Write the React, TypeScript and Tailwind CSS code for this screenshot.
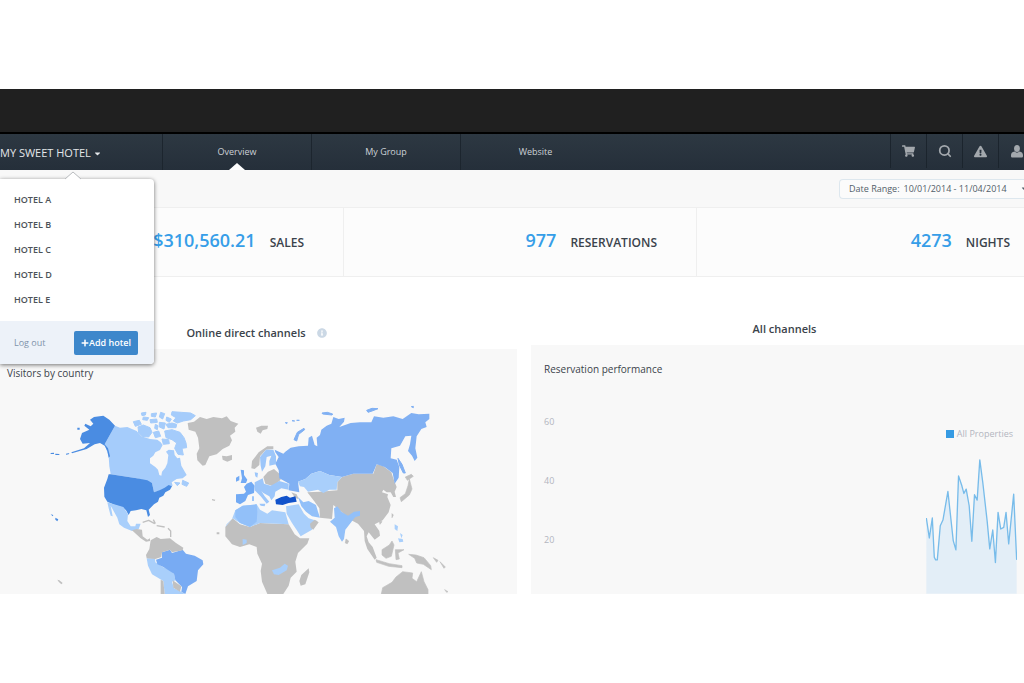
import { useState } from "react";
import { Search } from "lucide-react";
import { FaCaretDown, FaExclamationTriangle, FaInfoCircle, FaPlus, FaShoppingCart } from "react-icons/fa";

const hotels = ["HOTEL A", "HOTEL B", "HOTEL C", "HOTEL D", "HOTEL E"];

const tabs = ["Overview", "My Group", "Website"];

function PersonIcon() {
  return (
    <svg viewBox="0 0 12 13" className="h-[13px] w-3" fill="currentColor">
      <ellipse cx="6" cy="3.600" rx="2.900" ry="3.500" />
      <path d="M3.600 6.600C4.900 8 7.100 8 8.400 6.600 11 7 12 8.400 12 10.400V11c0 1-.6 1.500-1.500 1.500h-9C.6 12.500 0 12 0 11v-.6C0 8.400 1 7 3.600 6.600Z" />
    </svg>
  );
}

const tools = [
  { label: "Cart", icon: <FaShoppingCart className="h-3 w-[13px]" /> },
  { label: "Search", icon: <Search className="size-[14px]" strokeWidth={3} /> },
  { label: "Alerts", icon: <FaExclamationTriangle className="size-[13px]" /> },
  { label: "Account", icon: <PersonIcon /> },
];

const stats = [
  { value: "$310,560.21", label: "SALES", cell: "border-r pr-[39px]" },
  { value: "977", label: "RESERVATIONS", cell: "border-r pr-[39px]" },
  { value: "4273", label: "NIGHTS", cell: "pr-[14px]" },
];

function HotelMenu() {
  return (
    <div className="absolute top-full left-0 z-10 mt-[9px] w-[154px] rounded-r bg-white shadow-[0_1px_4px_rgba(0,0,0,0.55)]">
      <svg className="absolute -top-[8px] left-[64px] h-[9px] w-[18px]" viewBox="0 0 18 9">
        <path d="M1 8.500 9 1l8 7.500V9H1Z" fill="#fff" />
        <path d="M1 8 9 1l8 7" fill="none" stroke="#b9bcbf" strokeWidth="1" />
      </svg>
      <ul className="pt-2 pb-[9px]">
        {hotels.map((name) => (
          <li key={name}>
            <a href="#" className="block pl-[14px] text-[9px] leading-[25px] font-semibold text-[#4c5258]">
              {name}
            </a>
          </li>
        ))}
      </ul>
      <div className="flex h-[43px] items-center justify-between rounded-br bg-[#edf2f9] pr-4 pl-[14px]">
        <a href="#" className="text-[9px] text-[#7f93aa]">
          Log out
        </a>
        <button
          type="button"
          className="flex h-6 w-16 items-center justify-center rounded-xs bg-[#3d87cb] text-[9px] font-semibold text-white"
        >
          <FaPlus className="size-2" />
          Add hotel
        </button>
      </div>
    </div>
  );
}

function WorldMap() {
  return (
    <svg viewBox="0 0 1551 597" className="block w-full" role="img" aria-label="Visitors by country">
      <g transform="translate(120 0)" strokeLinejoin="round">
        {/* Canada */}
        <g fill="#a5ccfb">
          <path d="M225 92 240 98 262 96 290 108 304 124 330 132 352 134 362 142 368 150 360 165 346 172 340 182 330 190 330 205 346 216 354 224 358 240 364 242 366 230 376 218 382 205 385 180 378 170 386 164 402 166 404 180 412 190 420 188 424 212 440 240 428 250 410 252 395 262 398 272 374 282 342 292 336 264 290 250 212 238 208 214 206 184 194 148Z" />
          <path
            stroke="#a5ccfb"
            strokeWidth="3"
            d="M294 96 310 90 330 98 336 112 326 126 306 124 296 114ZM280 80 298 76 304 88 286 94ZM310 66 326 68 322 76 308 74ZM334 56 350 54 346 66 334 64ZM330 74 350 72 352 82 332 84ZM362 52 374 56 368 72 358 66ZM358 82 376 84 372 102 358 96ZM380 66 394 72 388 82 378 76ZM396 50 424 52 452 54 466 62 452 74 430 78 412 84 400 78 408 68 394 60ZM378 88 396 84 410 88 408 98 384 98ZM340 112 356 108 362 124 346 128ZM374 108 396 104 420 112 432 128 438 144 440 158 426 160 430 180 414 178 404 160 410 144 396 134 378 128ZM366 132 386 134 388 146 370 148ZM346 88 354 92 352 104 344 100ZM304 54 318 52 316 60 306 62ZM428 256 446 264 440 274 426 268ZM404 262 420 264 412 272Z"
          />
        </g>
        {/* United States */}
        <g fill="#4a8ce2">
          <path d="M225 92 208 74 190 62 162 66 150 74 160 86 152 94 136 86 133 92 148 104 126 114 120 132 128 146 150 144 132 160 94 172 96 175 140 162 164 148 180 144 194 152 202 168 206 188 210 184 204 160 194 148Z" />
          <path d="M212 238 290 250 322 256 336 264 342 292 362 284 374 278 386 270 396 274 390 284 376 292 370 302 358 308 354 320 342 328 326 344 330 360 324 366 319 346 304 342 288 346 272 348 266 360 258 346 250 338 224 330 202 320 193 305 192 278 202 252 206 238ZM78 176 88 174 86 178 78 179ZM32 174 42 173 42 177 32 177ZM46 176 58 177 58 180 46 180ZM112 98 119 98 119 104 112 104ZM32 358 40 360 38 364ZM46 368 55 373 52 379 46 374Z" />
        </g>
        {/* Mexico and the western half of South America */}
        <g fill="#a9cffb">
          <path d="M202 322 250 336 264 358 262 378 272 394 286 394 288 386 302 386 296 402 276 408 252 398 238 388 232 368 222 350 212 332 218 364 212 362 206 340Z" />
          <path d="M320 490 345 490 346 502 368 516 392 526 402 536 406 556 396 560 402 580 424 590 434 597 374 597 370 558 336 538 324 512Z" />
        </g>
        <path
          fill="#78abf3"
          d="M366 472 390 464 396 474 428 464 438 476 464 482 488 496 490 508 474 526 470 558 444 574 436 597 424 590 426 576 406 556 402 536 370 516 352 508 348 494 366 488Z"
        />
        {/* Countries without visitors */}
        <g fill="#c0c0c0">
          <path d="M276 406 290 402 306 404 308 424 322 434 330 430 330 438 318 440 302 430ZM332 436 350 426 362 432 390 430 408 444 430 458 428 466 396 472 390 464 366 472 364 486 346 492 320 490 318 480 328 462ZM362 554 370 558 374 597 362 597ZM398 556 424 574 420 590 400 578Z" />
          <path d="M443 84 462 80 480 66 500 72 520 66 546 70 560 64 572 78 595 86 584 98 586 110 570 122 576 136 568 152 548 162 530 178 508 184 496 210 488 212 472 196 470 176 478 160 474 128 466 110 446 104ZM546 182 560 184 576 180 576 194 562 200 548 194ZM516 312 526 314 524 318 516 316ZM530 412 538 412 538 418 530 418ZM52 554 58 556 68 564 64 568 56 560Z" />
        </g>
        <path
          fill="none"
          stroke="#c0c0c0"
          strokeWidth="4"
          d="m308 382 18-6 18 10M350 392l24 4M384 400l8 8v18M340 374l6 12"
        />
      </g>

      <g transform="translate(660 0)" strokeLinejoin="round">
        {/* Africa, Madagascar, Asia and Oceania */}
        <g fill="#c0c0c0">
          <path d="M38 370 60 388 90 396 120 384 206 388 224 418 240 430 268 430 262 446 234 474 226 500 230 530 212 548 206 572 190 597 142 597 126 560 122 528 126 506 112 476 110 456 88 448 60 456 36 448 16 424 16 396ZM244 540 266 520 268 532 256 568 242 572 238 558Z" />
          <path d="M262 292 300 290 352 286 352 262 366 246 400 236 460 236 470 208 488 212 514 232 522 256 530 276 524 290 528 306 520 306 512 292 500 292 490 284 486 292 504 298 502 306 512 330 506 352 488 376 464 388 478 408 480 422 464 434 446 412 440 424 446 442 458 456 470 488 464 494 442 462 434 438 432 408 414 386 394 376 364 350 340 330 336 372 300 368 298 340 284 320Z" />
          <path
            stroke="#c0c0c0"
            strokeWidth="2"
            d="M568 252 576 282 568 300 544 320 540 308 556 296 564 272ZM556 246 574 238 580 244 562 256ZM486 464 508 450 516 438 522 450 514 484 498 490 486 480ZM526 464 552 464 534 474 538 492 528 494ZM468 494 508 506 546 512 546 518 506 514 470 502ZM566 478 588 480 612 488 632 512 634 524 610 508 590 504 584 490ZM640 488 654 496 650 502ZM660 500 676 516 672 520ZM674 584 684 590 680 592ZM484 597 488 578 516 562 528 546 548 530 578 534 576 550 590 560 604 530 612 560 624 584 624 597ZM378 432 386 438 382 446 376 444ZM516 356 520 360 516 368ZM478 378 486 380 480 388Z"
          />
          <path d="M108 98 124 92 144 92 142 102 128 106 122 116 112 110ZM94 220 96 198 116 172 142 154 160 154 160 162 138 164 120 184 118 210 104 222ZM130 246 144 230 162 222 178 236 182 254 160 274 136 266ZM214 292 230 298 236 312 226 310Z" />
        </g>
        {/* Russia */}
        <g fill="#80b0f3">
          <path d="M164 164 190 176 196 170 212 158 236 154 264 152 266 128 276 122 284 150 292 154 290 128 300 120 304 104 320 92 334 86 340 66 356 72 374 68 372 80 358 96 392 84 420 82 454 82 462 64 490 68 520 64 548 72 574 54 596 58 628 56 628 72 616 82 620 96 604 102 590 124 586 160 592 188 584 198 576 182 564 168 570 148 574 122 556 124 540 152 514 160 512 190 530 194 538 216 536 248 524 266 518 234 494 216 470 208 458 236 400 236 366 246 328 240 300 228 274 236 256 252 234 260 238 292 206 286 208 266 178 250 176 226 166 206 176 186 166 172Z" />
          <path
            stroke="#80b0f3"
            strokeWidth="3"
            d="M222 134 232 112 252 100 254 104 236 118 230 138ZM306 54 322 52 338 57 336 60 308 57ZM440 46 456 40 474 41 456 48 444 52ZM196 83 202 83 200 86ZM216 77 224 78ZM230 76 238 76ZM574 35 580 34 580 38ZM534 190 546 208 556 234 550 234 538 210Z"
          />
        </g>
        {/* Western Europe */}
        <g fill="#72aaf4">
          <path d="M48 298 72 296 78 290 72 276 80 266 94 260 104 272 102 294 84 300 76 318 60 328 48 322ZM62 224 72 226 72 240 82 254 78 264 62 264 66 250ZM48 248 58 242 58 256 48 260Z" />
          <path
            fill="#9cc6fa"
            d="M104 262 128 250 132 266 152 272 178 258 206 266 206 284 184 280 166 290 164 304 154 316 148 304 130 294 124 288 134 304 148 320 140 326 122 304 104 286ZM122 212 120 186 138 164 160 164 168 184 168 208 148 212 148 198 154 182 140 186 136 214 126 230ZM104 232 114 234 112 248 106 244ZM118 326 136 326 134 334 122 332ZM96 304 102 304 102 318 96 318Z"
          />
        </g>
        {/* North Africa, the Gulf and central Asia */}
        <g fill="#a9cffb">
          <path d="M234 260 256 252 274 236 300 228 328 240 366 246 352 262 350 284 328 284 310 294 294 284 264 290 252 276 240 274Z" />
          <path d="M20 388 36 372 46 346 68 332 110 328 120 344 142 356 156 346 196 352 206 388 120 384 90 396 60 384 38 370 16 396Z" />
          <path d="M198 334 236 328 252 356 266 370 292 378 276 404 242 424 232 408 216 384 200 356Z" />
          <path d="M68 432 80 434 80 444 68 450ZM156 526 180 518 194 506 204 512 200 526 176 540 162 538ZM524 388 534 394 532 408 524 402ZM540 414 548 420 544 430ZM534 430 548 432 550 440 538 442Z" />
        </g>
        <path fill="#c0c0c0" d="M272 398 270 386 284 374 296 382 280 404Z" />
        <g fill="#92c0f9">
          <path d="M46 346 68 332 110 328 112 350 110 380 90 396 60 384 46 366Z" />
          <path d="M234 306 250 322 266 318 288 330 294 350 300 368 276 364 258 350 244 334ZM330 380 344 368 342 340 352 334 364 350 384 362 402 350 420 348 420 362 406 366 398 376 390 386 376 404 372 432 366 440 356 424 348 396Z" />
        </g>
        <path fill="#1253cb" d="M166 314 184 306 200 302 210 308 226 304 230 320 206 324 188 330 168 328Z" />
      </g>
    </svg>
  );
}

function PerformanceChart() {
  const line =
    "1,177 10,237 19,177 25,295 29,303 34,303 43,200 51,183 66,97 82,245 90,273 98,50 108,80 114,103 121,90 130,140 138,247 146,107 154,123 162,2 171,70 184,185 192,270 201,213 209,311 217,160 225,210 234,205 241,160 249,255 264,105 273,303";
  return (
    <svg viewBox="0 0 274 405" className="block h-[135px] w-[91px]" role="img" aria-label="All Properties">
      <polygon points={`1,405 ${line} 273,405`} fill="#e3eef7" />
      <polyline points={line} fill="none" stroke="#78bcea" strokeWidth="4" strokeLinejoin="round" />
    </svg>
  );
}

export default function App() {
  const [range, setRange] = useState("10/01/2014 - 11/04/2014");
  return (
    <div className="overflow-hidden bg-white pt-[89px] font-['Open_Sans','Noto_Sans',sans-serif] text-[#3b434b]">
      <div className="h-[45px] border-b-2 border-black bg-[#202020]" />

      <header className="relative flex h-9 bg-linear-to-b from-[#2d3842] to-[#252f3a]">
        <div className="w-[163px] shrink-0 border-r border-[#1c252e]">
          <button type="button" className="flex h-[38px] items-center gap-[2px] text-[11px] text-[#e4e7ea]">
            MY SWEET HOTEL
            <FaCaretDown className="size-[9px]" />
          </button>
          <HotelMenu />
        </div>
        <nav className="flex grow">
          {tabs.map((tab, i) => (
            <a
              key={tab}
              href="#"
              className={
                i < 2
                  ? "relative w-[149px] border-r border-[#1c252e] text-center text-[9px] leading-[35px] text-[#ccd1d6]"
                  : "relative w-[149px] text-center text-[9px] leading-[35px] text-[#ccd1d6]"
              }
            >
              {tab}
              {i === 0 && (
                <svg className="absolute bottom-0 left-[66px] h-[7px] w-[16px]" viewBox="0 0 16 7">
                  <path d="M0 7 8 0l8 7Z" fill="#fff" />
                </svg>
              )}
            </a>
          ))}
        </nav>
        <div className="flex w-[134px] shrink-0 overflow-hidden">
          {tools.map(({ label, icon }) => (
            <button
              key={label}
              type="button"
              aria-label={label}
              className="flex h-[34px] w-9 shrink-0 items-center justify-center border-l border-[#1b242d] text-[#a3a8ad]"
            >
              {icon}
            </button>
          ))}
        </div>
      </header>

      <div className="flex h-[37px] items-center justify-end bg-[#f8f8f8]">
        <label className="flex h-5 w-[185px] items-center overflow-hidden rounded-l-sm border border-r-0 border-[#dde7ee] bg-[#fbfbfb] pl-[9px] text-[9px] whitespace-nowrap text-[#525e69]">
          Date Range:
          <select
            value={range}
            onChange={(e) => setRange(e.target.value)}
            className="ml-1 w-[116px] shrink-0 appearance-none bg-transparent"
          >
            <option>10/01/2014 - 11/04/2014</option>
          </select>
          <FaCaretDown className="size-[9px] shrink-0" />
        </label>
      </div>

      <section className="grid h-[70px] grid-cols-[344fr_353fr_327fr] border-y border-[#efefef] bg-[#fcfcfc]">
        {stats.map(({ value, label, cell }) => (
          <div key={label} className={`flex items-baseline justify-end gap-[14px] border-[#efefef] pt-5 ${cell}`}>
            <span className="text-[18px] leading-6 font-semibold text-[#369ee8]">{value}</span>
            <span className="text-[12px] font-semibold">{label}</span>
          </div>
        ))}
      </section>

      <main className="grid h-[317px] grid-cols-[517fr_493fr] gap-x-[14px]">
        <section className="flex flex-col">
          <h2 className="flex h-[72px] items-end justify-center gap-[11px] pr-1 pb-[7px] text-[11px] leading-[18px] font-semibold">
            Online direct channels
            <FaInfoCircle className="mb-1 size-[10px] text-[#cbd8e5]" />
          </h2>
          <div className="min-h-0 grow overflow-hidden bg-[#f8f8f8] pt-4">
            <h3 className="pl-[7px] text-[10px] leading-4">Visitors by country</h3>
            <div className="mt-[14px]">
              <WorldMap />
            </div>
          </div>
        </section>
        <section className="flex flex-col">
          <h2 className="h-[68px] pt-[43px] pl-[14px] text-center text-[11px] leading-[18px] font-semibold">
            All channels
          </h2>
          <div className="flex min-h-0 grow flex-col bg-[#f8f8f8] pt-4 pl-[13px]">
            <h3 className="text-[10px] leading-4">Reservation performance</h3>
            <div className="flex grow justify-between pt-[37px]">
              <ul className="flex flex-col gap-[43px] text-[9px] leading-4 text-[#b3b6bf]">
                <li>60</li>
                <li>40</li>
                <li>20</li>
              </ul>
              <div className="flex flex-col items-end justify-between pt-3 pr-[7px]">
                <div className="flex items-center gap-[3px] pr-1 text-[9px] leading-4 text-[#b3b6bf]">
                  <span className="size-2 bg-[#369be3]" />
                  All Properties
                </div>
                <PerformanceChart />
              </div>
            </div>
          </div>
        </section>
      </main>
      <div className="h-[89px]" />
    </div>
  );
}
